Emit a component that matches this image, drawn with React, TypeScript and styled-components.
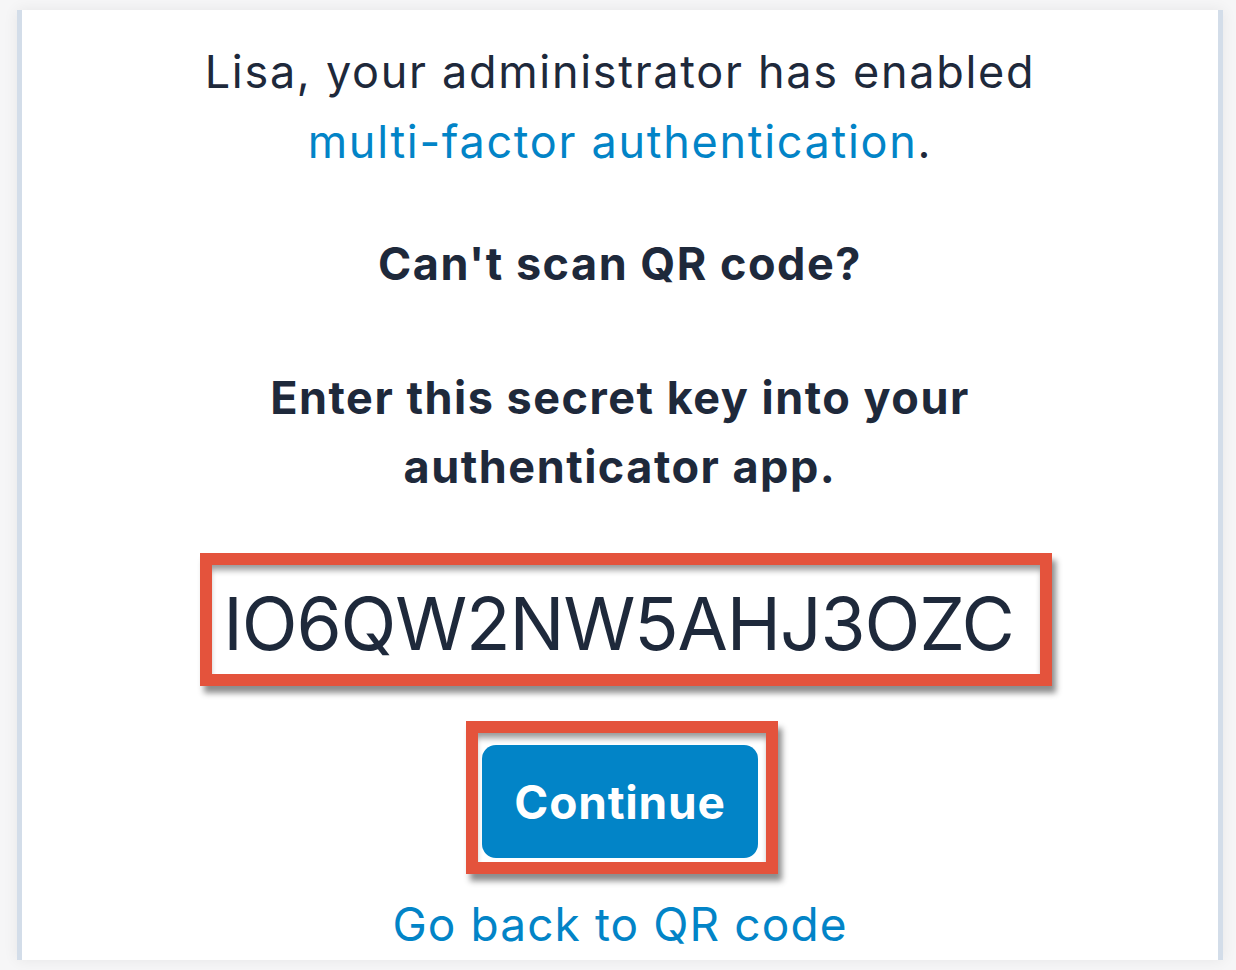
import styled, { createGlobalStyle } from "styled-components";

const GlobalStyle = createGlobalStyle`
  html, body {
    margin: 0;
    padding: 0;
    background: #f6f6f7;
  }
  body {
    font-family: Inter, "Noto Sans", "Liberation Sans", sans-serif;
    color: #1e293b;
  }
`;

const Page = styled.div`
  width: 1236px;
  height: 970px;
  padding: 10px 13px 10px 17px;
  box-sizing: border-box;
`;

const Panel = styled.main`
  height: 950px;
  box-sizing: border-box;
  background: #ffffff;
  border-left: 5px solid #d3dde9;
  border-right: 5px solid #d3dde9;
  box-shadow: 0 0 14px rgba(0, 0, 0, 0.07);
  padding-top: 27px;
  display: flex;
  flex-direction: column;
  align-items: center;
  text-align: center;
`;

const Intro = styled.p`
  margin: 0;
  font-size: 45px;
  line-height: 70px;
  font-weight: 400;
  letter-spacing: 1.7px;
`;

const Link = styled.a`
  color: #0284c7;
  text-decoration: none;
`;

const Heading = styled.h2<{ $gap: number }>`
  margin: ${(p) => p.$gap}px 0 0;
  font-size: 45px;
  line-height: 69px;
  font-weight: 700;
  letter-spacing: 1.5px;
`;

const Callout = styled.div<{ $gap: number; $pad: string; $shift: number }>`
  margin-top: ${(p) => p.$gap}px;
  margin-left: ${(p) => p.$shift}px;
  padding: ${(p) => p.$pad};
  border: 12px solid #e4533c;
  box-shadow: 4px 7px 6px rgba(0, 0, 0, 0.45),
    inset 0 7px 6px -2px rgba(0, 0, 0, 0.4);
  background: #ffffff;
`;

const SecretKey = styled.div`
  font-size: 73px;
  line-height: 101px;
  font-weight: 400;
  letter-spacing: -1.1px;
  white-space: nowrap;
`;

const Button = styled.button`
  width: 276px;
  height: 113px;
  border: none;
  border-radius: 14px;
  background: #0284c7;
  color: #ffffff;
  font-family: inherit;
  font-size: 46px;
  font-weight: 700;
  letter-spacing: 0.8px;
  cursor: pointer;
  display: flex;
  align-items: center;
  justify-content: center;
`;

const BackLink = styled.a`
  margin-top: 15px;
  font-size: 46px;
  line-height: 70px;
  color: #0284c7;
  text-decoration: none;
  letter-spacing: 1.1px;
`;

export default function App() {
  return (
    <>
      <GlobalStyle />
      <Page>
        <Panel>
          <Intro>
            Lisa, your administrator has enabled
            <br />
            <Link href="#">multi-factor authentication</Link>.
          </Intro>
          <Heading $gap={52}>Can't scan QR code?</Heading>
          <Heading $gap={65}>
            Enter this secret key into your
            <br />
            authenticator app.
          </Heading>
          <Callout $gap={52} $pad="8px 26px 0 11px" $shift={12}>
            <SecretKey>IO6QW2NW5AHJ3OZC</SecretKey>
          </Callout>
          <Callout $gap={35} $pad="12px 8px 4px 4px" $shift={4}>
            <Button>Continue</Button>
          </Callout>
          <BackLink href="#">Go back to QR code</BackLink>
        </Panel>
      </Page>
    </>
  );
}
